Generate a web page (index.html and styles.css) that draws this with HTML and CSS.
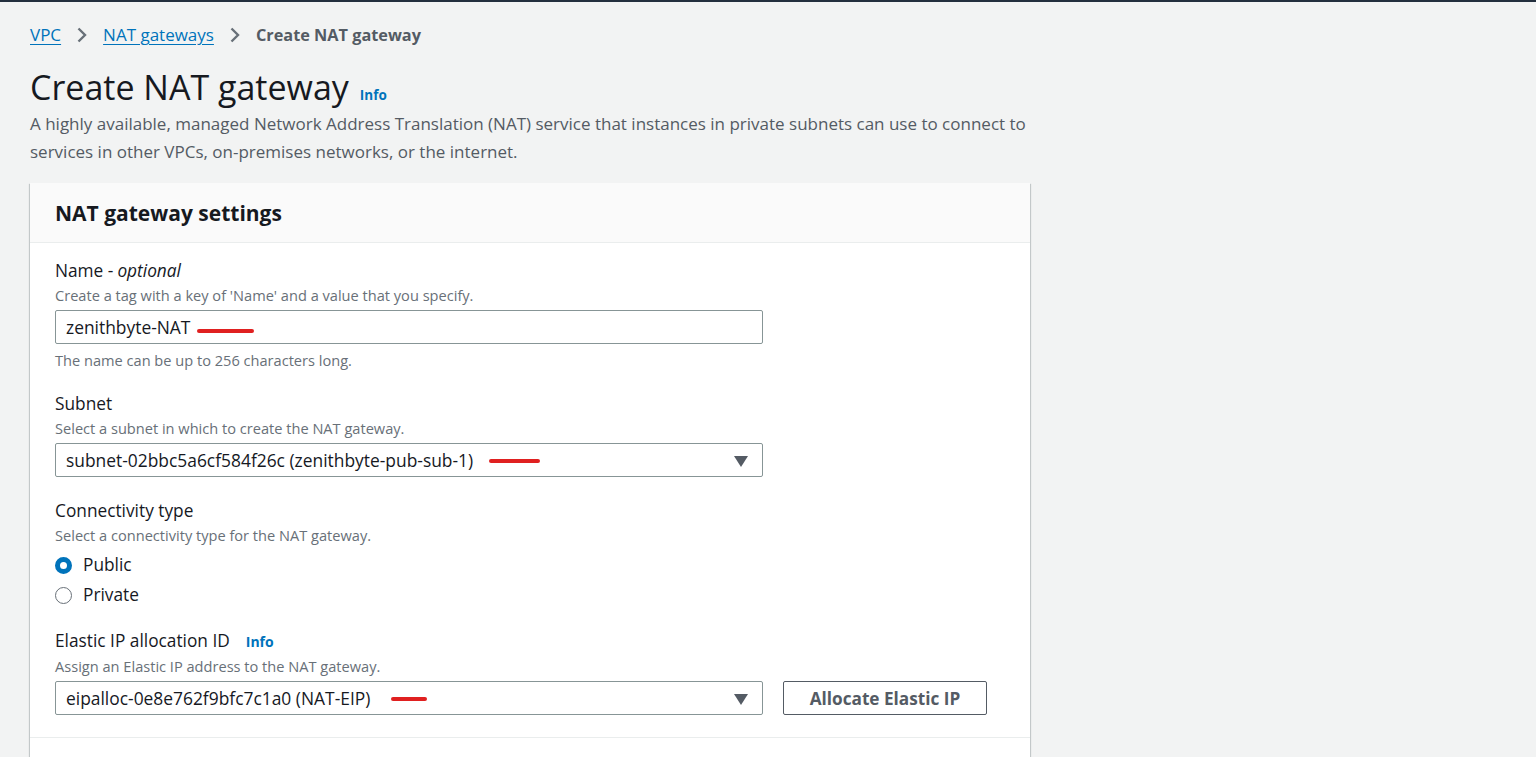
FILE: index.html
```html
<!DOCTYPE html>
<html>
<head>
<meta charset="utf-8">
<link rel="stylesheet" href="styles.css">
</head>
<body>
<div class="topbar"></div>
<main class="page">
  <nav class="crumbs">
    <a class="crumb-link">VPC</a>
    <svg class="chev" width="14" height="18" viewBox="0 0 14 18"><path d="M3.5 2.5l6.5 6.5-6.5 6.5" fill="none" stroke="#687078" stroke-width="2.4"/></svg>
    <a class="crumb-link">NAT gateways</a>
    <svg class="chev" width="14" height="18" viewBox="0 0 14 18"><path d="M3.5 2.5l6.5 6.5-6.5 6.5" fill="none" stroke="#687078" stroke-width="2.4"/></svg>
    <span class="crumb-current">Create NAT gateway</span>
  </nav>
  <header class="head">
    <h1 class="title">Create NAT gateway <span class="info big">Info</span></h1>
    <p class="lead">A highly available, managed Network Address Translation (NAT) service that instances in private subnets can use to connect to services in other VPCs, on-premises networks, or the internet.</p>
  </header>
  <section class="card">
    <div class="card-head"><h2>NAT gateway settings</h2></div>
    <div class="card-body">
      <div class="field">
        <div class="label">Name - <i>optional</i></div>
        <div class="desc">Create a tag with a key of 'Name' and a value that you specify.</div>
        <div class="input"><span>zenithbyte-NAT</span><span class="mark m1"></span></div>
        <div class="help">The name can be up to 256 characters long.</div>
      </div>
      <div class="field">
        <div class="label">Subnet</div>
        <div class="desc">Select a subnet in which to create the NAT gateway.</div>
        <div class="input select"><span>subnet-02bbc5a6cf584f26c (zenithbyte-pub-sub-1)</span><span class="mark m2"></span><span class="caret"></span></div>
      </div>
      <div class="field conn">
        <div class="label">Connectivity type</div>
        <div class="desc">Select a connectivity type for the NAT gateway.</div>
        <div class="radios">
          <div class="radio"><span class="dot on"></span>Public</div>
          <div class="radio"><span class="dot"></span>Private</div>
        </div>
      </div>
      <div class="field">
        <div class="label">Elastic IP allocation ID <span class="info">Info</span></div>
        <div class="desc">Assign an Elastic IP address to the NAT gateway.</div>
        <div class="row">
          <div class="input select"><span>eipalloc-0e8e762f9bfc7c1a0 (NAT-EIP)</span><span class="mark m3"></span><span class="caret"></span></div>
          <button class="btn">Allocate Elastic IP</button>
        </div>
      </div>
    </div>
    <div class="card-foot">
      <div class="more"><svg width="12" height="12" viewBox="0 0 12 12"><path d="M3 1l6 5-6 5z" fill="#16191f"/></svg>Additional settings</div>
    </div>
  </section>
</main>
</body>
</html>
```
FILE: styles.css
```css
* { box-sizing: border-box; }
html, body { margin: 0; padding: 0; }
body {
  background: #f2f3f3;
  font-family: "Open Sans", "Noto Sans", sans-serif;
  color: #16191f;
  height: 757px;
  overflow: hidden;
}
.topbar { height: 2px; background: #232f3e; }
.page { padding: 0 30px; }
.crumbs {
  display: flex; align-items: center; gap: 14px;
  height: 66px; padding-bottom: 1px;
  font-size: 17px;
}
.crumb-link { color: #0073bb; text-decoration: underline; text-underline-offset: 3px; }
.crumb-current { color: #545b64; font-weight: 700; font-size: 16.3px; }
.chev { display: block; }
.head { max-width: 1010px; }
.title {
  margin: 0; font-size: 34px; font-weight: 400; height: 38px; line-height: 38px;
  display: flex; align-items: baseline; gap: 11px;
}
.info { color: #0073bb; font-weight: 700; font-size: 13.5px; }
.lead { margin: 4px 0 0; font-size: 17px; line-height: 28px; color: #545b64; padding-bottom: 17px; }
.card {
  width: 1000px; background: #fff;
  box-shadow: 0 1px 1px 0 rgba(0,28,36,.3), 1px 1px 1px 0 rgba(0,28,36,.15), -1px 1px 1px 0 rgba(0,28,36,.15);
}
.card-head { background: #fafafa; border-bottom: 1px solid #eaeded; height: 60px; padding: 0 25px; display: flex; align-items: center; }
.card-head h2 { margin: 0; font-size: 21px; font-weight: 700; }
.card-body { padding: 15px 25px 22px; border-bottom: 1px solid #eaeded; }
.field { margin-bottom: 21px; }
.field.conn { margin-bottom: 22px; }
.field:last-child { margin-bottom: 0; }
.label { font-size: 17.3px; line-height: 26px; display: flex; align-items: baseline; gap: 4px; }
.label .info { margin-left: 12px; font-size: 14px; }
.desc { font-size: 14.6px; line-height: 22px; color: #687078; margin-bottom: 4px; }
.help { font-size: 14.6px; line-height: 20px; color: #687078; margin-top: 6px; }
.input {
  position: relative;
  width: 708px; height: 34px; border: 1px solid #879596; border-radius: 2px;
  display: flex; align-items: center; padding: 0 10px;
  font-size: 17.4px;
}
.caret {
  position: absolute; right: 14px; top: 12px;
  width: 0; height: 0; border-left: 7px solid transparent; border-right: 7px solid transparent; border-top: 11px solid #545b64;
}
.mark { display: inline-block; height: 4px; background: #e02020; border-radius: 2px; }
.m1 { width: 57px; margin-left: 7px; margin-top: 7px; }
.m2 { width: 51px; margin-left: 16px; margin-top: 2px; }
.m3 { width: 36px; margin-left: 21px; margin-top: 2px; }
.radios { display: flex; flex-direction: column; gap: 8px; padding-top: 4px; }
.radio { display: flex; align-items: center; gap: 11px; font-size: 17.3px; line-height: 22px; }
.dot { width: 17px; height: 17px; border-radius: 50%; border: 1.5px solid #687078; background: #fff; }
.dot.on { border: 5px solid #0073bb; }
.row { display: flex; gap: 20px; align-items: center; }
.btn {
  width: 204px; height: 34px; background: #fff; border: 1px solid #545b64; border-radius: 2px;
  font-family: inherit; font-size: 17.2px; font-weight: 700; color: #545b64;
}
.card-foot { padding: 14px 25px 10px; }
.more { display: flex; align-items: center; gap: 6px; font-size: 19px; font-weight: 700; }
.more svg { margin-left: 25px; }
```
